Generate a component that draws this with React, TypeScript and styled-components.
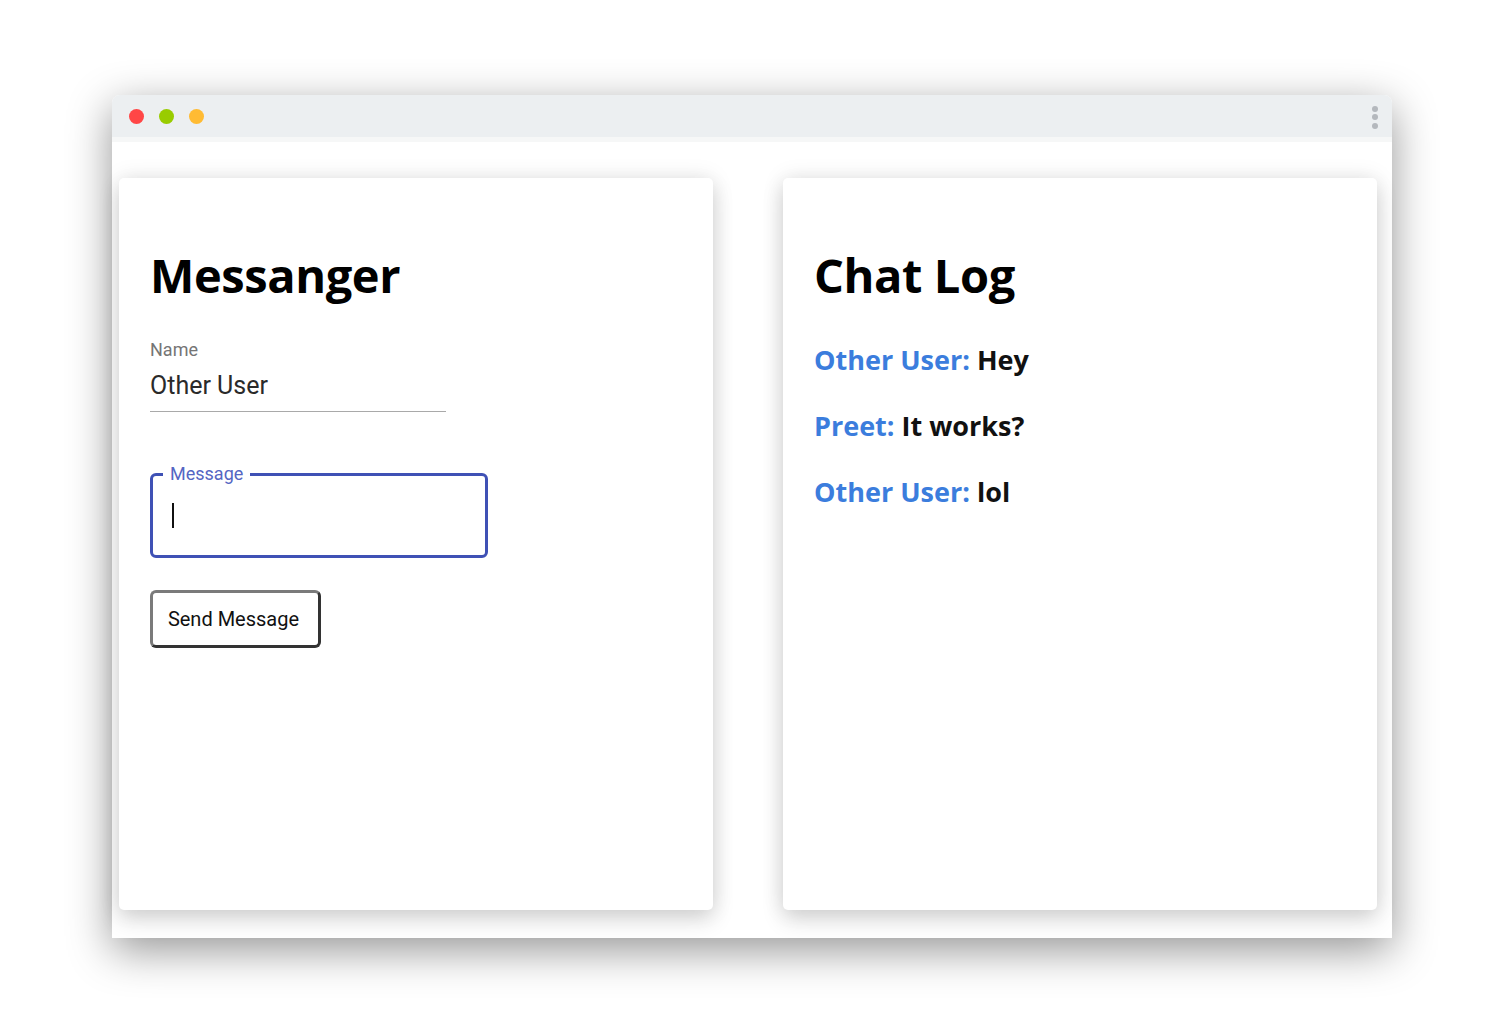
import styled, { createGlobalStyle } from "styled-components";

const GlobalStyle = createGlobalStyle`
  html, body {
    margin: 0;
    padding: 0;
    background: #ffffff;
  }
  * {
    box-sizing: border-box;
  }
`;

const Page = styled.div`
  width: 1504px;
  height: 1018px;
  padding: 95px 0 0 112px;
  overflow: hidden;
`;

const Window = styled.div`
  width: 1280px;
  height: 843px;
  background: #ffffff;
  border-radius: 8px 8px 0 0;
  box-shadow: 0 12px 44px rgba(0, 0, 0, 0.42);
  display: flex;
  flex-direction: column;
`;

const TitleBar = styled.div`
  height: 42px;
  background: #eceff1;
  border-radius: 8px 8px 0 0;
  display: flex;
  align-items: center;
  justify-content: space-between;
  padding: 0 14px 0 17px;
  border-bottom: 5px solid #f6f7f7;
  box-sizing: content-box;
`;

const Dots = styled.div`
  display: flex;
  gap: 15px;
`;

const Dot = styled.span<{ $color: string }>`
  width: 15px;
  height: 15px;
  border-radius: 50%;
  background: ${(p) => p.$color};
`;

const Kebab = styled.div`
  display: flex;
  flex-direction: column;
  gap: 2.5px;
  margin-top: 2px;
`;

const KebabDot = styled.span`
  width: 6px;
  height: 6px;
  border-radius: 50%;
  background: #b4b8bd;
`;

const Content = styled.div`
  flex: 1;
  display: grid;
  grid-template-columns: 594px 594px;
  column-gap: 70px;
  padding: 36px 15px 28px 7px;
`;

const Card = styled.section`
  background: #ffffff;
  border-radius: 5px;
  box-shadow: 0 0 22px rgba(0, 0, 0, 0.1), 0 10px 22px rgba(0, 0, 0, 0.14);
  padding: 62px 31px 0;
  font-family: "Open Sans", "Noto Sans", sans-serif;
`;

const Heading = styled.h1`
  margin: 0;
  font-size: 47px;
  font-weight: 700;
  line-height: 70px;
  letter-spacing: -0.4px;
  color: #000000;
`;

const Field = styled.div`
  margin-top: 29px;
  width: 296px;
  font-family: Roboto, "Liberation Sans", sans-serif;
  border-bottom: 1.5px solid #a9a9a9;
  padding-bottom: 10px;
`;

const SmallLabel = styled.div`
  font-size: 18px;
  color: #757575;
  line-height: 22px;
`;

const Value = styled.div`
  margin-top: 10px;
  font-size: 25px;
  color: #2a2a2a;
  line-height: 30px;
`;

const Outlined = styled.div`
  position: relative;
  margin-top: 61px;
  width: 338px;
  height: 85px;
  border: 3px solid #3f51b5;
  border-radius: 6px;
  display: flex;
  align-items: center;
  padding-left: 19px;
  font-family: Roboto, "Liberation Sans", sans-serif;
`;

const Legend = styled.span`
  position: absolute;
  top: -14px;
  left: 10px;
  padding: 0 7px;
  background: #ffffff;
  font-size: 18px;
  line-height: 24px;
  color: #5566c3;
`;

const Caret = styled.span`
  width: 2px;
  height: 25px;
  background: #111111;
`;

const SendButton = styled.button`
  margin-top: 32px;
  width: 171px;
  height: 58px;
  background: #ffffff;
  border: 3px solid;
  border-color: #7a7a7a #333333 #333333 #7a7a7a;
  border-radius: 6px;
  font-family: Roboto, "Liberation Sans", sans-serif;
  font-size: 20px;
  color: #111111;
  padding: 0 4px 0 0;
  cursor: pointer;
`;

const Log = styled.div`
  margin-top: 32px;
  display: flex;
  flex-direction: column;
  gap: 30px;
`;

const Line = styled.p`
  margin: 0;
  font-size: 27px;
  font-weight: 700;
  line-height: 36px;
  color: #111111;
`;

const Author = styled.span`
  color: #3b7ddd;
`;

const messages = [
  { from: "Other User", text: "Hey" },
  { from: "Preet", text: "It works?" },
  { from: "Other User", text: "lol" },
];

export default function App() {
  return (
    <>
      <GlobalStyle />
      <Page>
        <Window>
          <TitleBar>
            <Dots>
              <Dot $color="#ff4646" />
              <Dot $color="#99cc00" />
              <Dot $color="#ffbb33" />
            </Dots>
            <Kebab>
              <KebabDot />
              <KebabDot />
              <KebabDot />
            </Kebab>
          </TitleBar>
          <Content>
            <Card>
              <Heading>Messanger</Heading>
              <Field>
                <SmallLabel>Name</SmallLabel>
                <Value>Other User</Value>
              </Field>
              <Outlined>
                <Legend>Message</Legend>
                <Caret />
              </Outlined>
              <SendButton>Send Message</SendButton>
            </Card>
            <Card>
              <Heading>Chat Log</Heading>
              <Log>
                {messages.map((m, i) => (
                  <Line key={i}>
                    <Author>{m.from}:</Author> {m.text}
                  </Line>
                ))}
              </Log>
            </Card>
          </Content>
        </Window>
      </Page>
    </>
  );
}
